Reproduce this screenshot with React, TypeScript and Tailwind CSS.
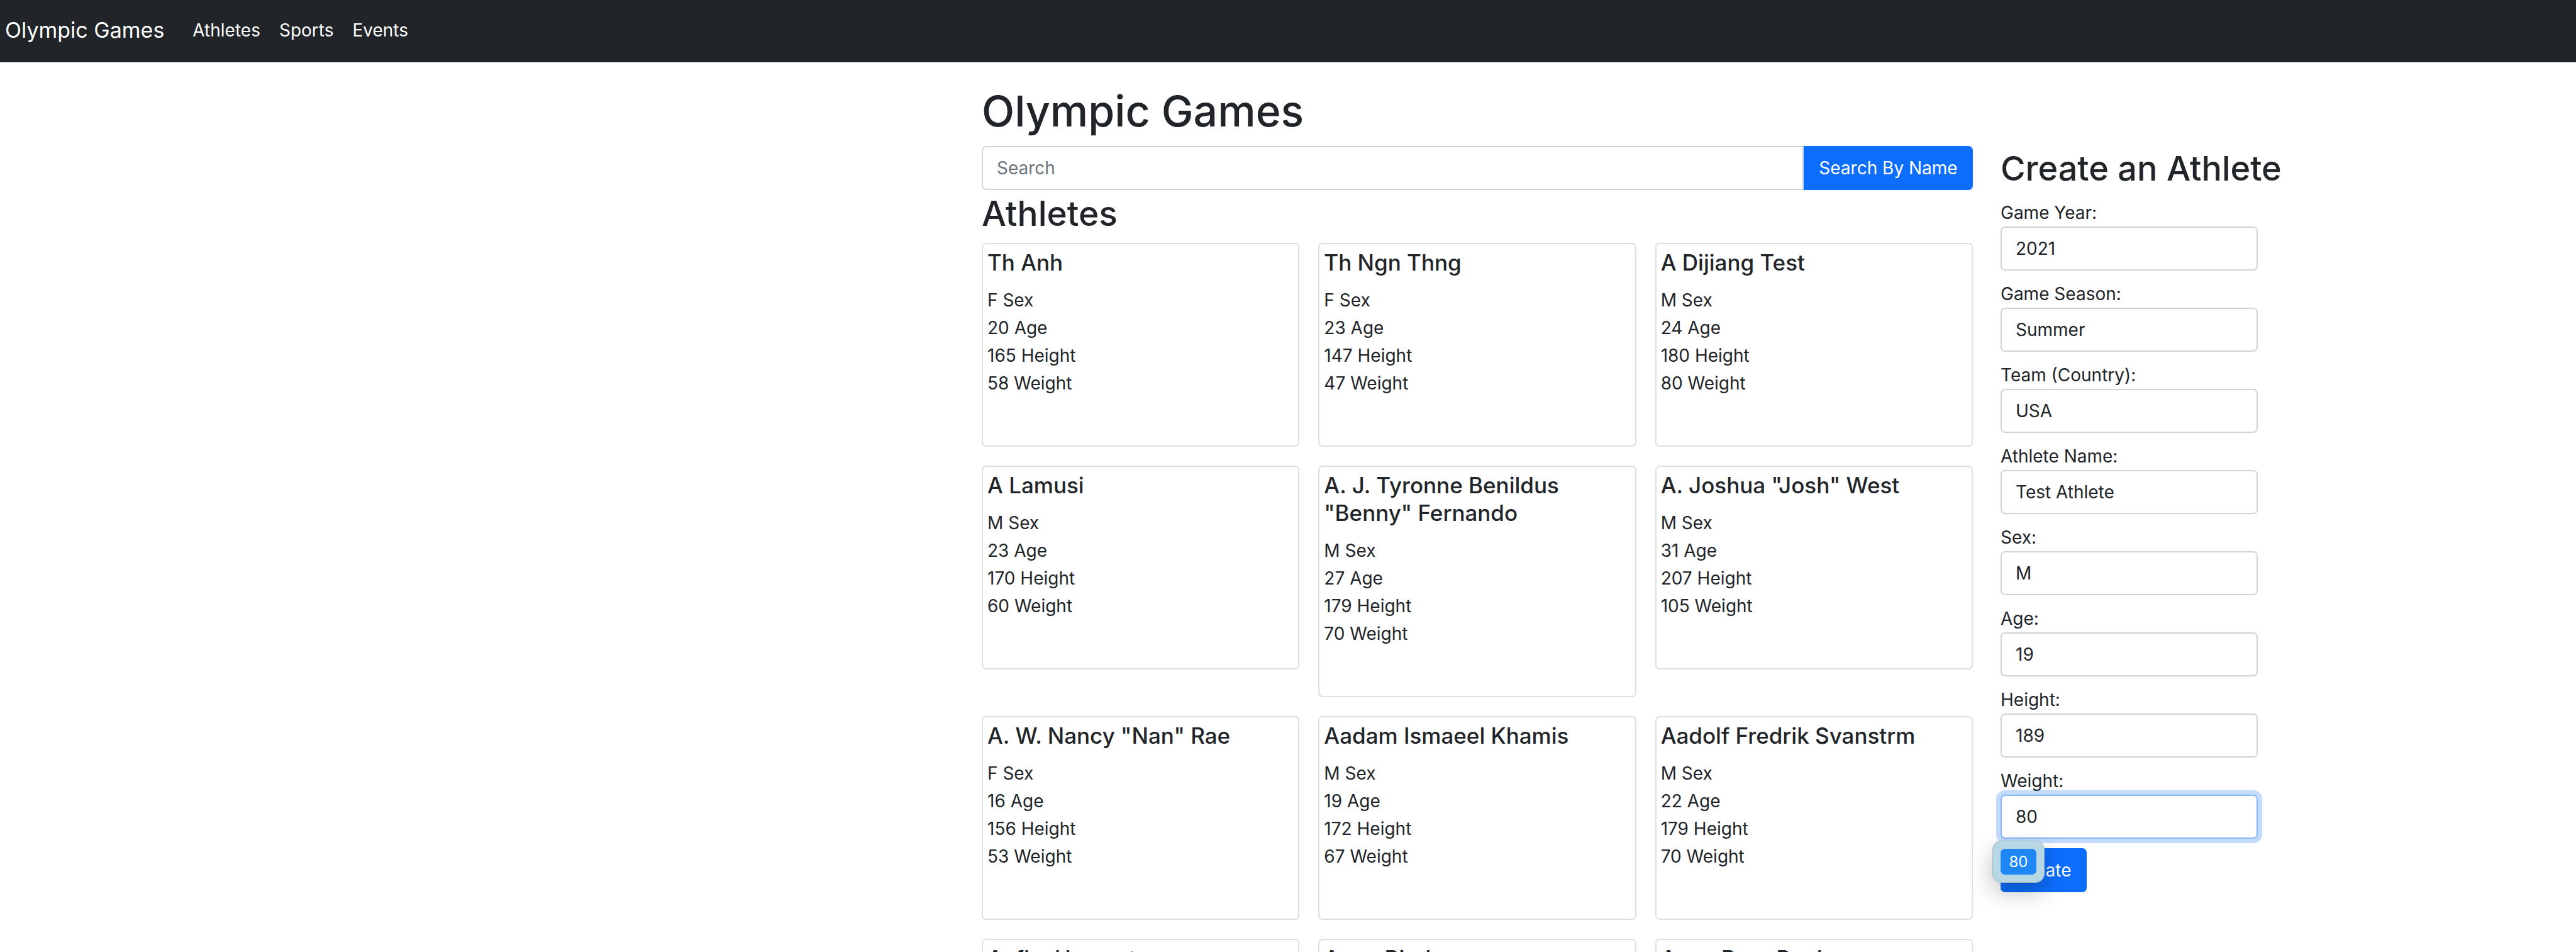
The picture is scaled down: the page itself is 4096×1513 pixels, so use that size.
const ATHLETES = [
  { name: 'Th Anh', sex: 'F', age: 20, height: 165, weight: 58 },
  { name: 'Th Ngn Thng', sex: 'F', age: 23, height: 147, weight: 47 },
  { name: 'A Dijiang Test', sex: 'M', age: 24, height: 180, weight: 80 },
  { name: 'A Lamusi', sex: 'M', age: 23, height: 170, weight: 60 },
  { name: 'A. J. Tyronne Benildus "Benny" Fernando', sex: 'M', age: 27, height: 179, weight: 70 },
  { name: 'A. Joshua "Josh" West', sex: 'M', age: 31, height: 207, weight: 105 },
  { name: 'A. W. Nancy "Nan" Rae', sex: 'F', age: 16, height: 156, weight: 53 },
  { name: 'Aadam Ismaeel Khamis', sex: 'M', age: 19, height: 172, weight: 67 },
  { name: 'Aadolf Fredrik Svanstrm', sex: 'M', age: 22, height: 179, weight: 70 },
  { name: 'Aafke Hament' },
  { name: 'Aage Birch' },
  { name: 'Aage Brge Poulsen' },
];

const FIELDS = [
  { id: 'year', label: 'Game Year:', value: '2021' },
  { id: 'season', label: 'Game Season:', value: 'Summer' },
  { id: 'team', label: 'Team (Country):', value: 'USA' },
  { id: 'name', label: 'Athlete Name:', value: 'Test Athlete' },
  { id: 'sex', label: 'Sex:', value: 'M' },
  { id: 'age', label: 'Age:', value: '19' },
  { id: 'height', label: 'Height:', value: '189' },
  { id: 'weight', label: 'Weight:', value: '80', active: true },
];

type Athlete = { name: string; sex?: string; age?: number; height?: number; weight?: number };

function Navbar() {
  return (
    <nav className="flex h-[99px] items-center bg-[#212529] px-2 pb-[3px] text-white">
      <a href="#" className="mr-[30px] text-[34px] leading-[56px]">Olympic Games</a>
      <div className="flex text-[28px] leading-[44px]">
        <a href="#athletes" className="px-[15px]">Athletes</a>
        <a href="#sports" className="px-[15px]">Sports</a>
        <a href="#events" className="px-[15px]">Events</a>
      </div>
    </nav>
  );
}

function AthleteCard({ athlete }: { athlete: Athlete }) {
  return (
    <article className="min-h-[324px] rounded-[7px] border-2 border-[#dfdfdf] bg-white px-[7px] pt-[7px] pb-[77px]">
      <h3 className="mb-4 text-[35px] leading-[44px] font-medium">{athlete.name}</h3>
      {athlete.sex && (
        <>
          <p>{athlete.sex} Sex</p>
          <p>{athlete.age} Age</p>
          <p>{athlete.height} Height</p>
          <p>{athlete.weight} Weight</p>
        </>
      )}
    </article>
  );
}

function CreateForm() {
  return (
    <form className="pt-[134px] pl-11" onSubmit={(e) => e.preventDefault()}>
      <h2 className="mb-[13px] text-[54px] leading-[70px] font-medium whitespace-nowrap">Create an Athlete</h2>
      {FIELDS.map((f) => (
        <div key={f.id} className="mb-[15px]">
          <label htmlFor={f.id} className="block">{f.label}</label>
          <input
            id={f.id}
            type="text"
            defaultValue={f.value}
            className={
              f.active
                ? 'block h-[70px] w-[409px] rounded-[7px] border-2 border-[#86b7fe] bg-white px-[22px] shadow-[0_0_0_7px_#c2dbfe] outline-none'
                : 'block h-[70px] w-[409px] rounded-[7px] border-2 border-[#ced4da] bg-white px-[22px] outline-none'
            }
          />
        </div>
      ))}
      <div className="relative w-[137px]">
        <button type="submit" className="h-[70px] w-full rounded-[7px] bg-[#0d6efd] text-white">Create</button>
        <div className="absolute -top-3 -left-[13px] flex h-[67px] w-[83px] items-center justify-center rounded-[14px] border border-[#a3b9c2] bg-[#b7d7e5] shadow-[0_14px_36px_rgba(0,0,0,0.25)]">
          <button type="button" className="h-[41px] w-[57px] rounded-[7px] bg-[#2087f6] text-[24px] leading-[41px] text-white">80</button>
        </div>
      </div>
    </form>
  );
}

export default function App() {
  return (
    <div className="h-screen overflow-hidden bg-white font-['Inter',sans-serif] text-[28px] leading-[44px] text-[#212529]">
      <Navbar />
      <div className="grid grid-cols-[1561fr_1576fr_959fr]">
        <main className="col-start-2 pt-8">
          <h1 className="mb-[11px] text-[68px] leading-[90px] font-medium">Olympic Games</h1>
          <form className="flex" onSubmit={(e) => e.preventDefault()}>
            <input
              type="text"
              placeholder="Search"
              aria-label="Search"
              className="h-[70px] min-w-0 flex-1 rounded-l-[7px] border-2 border-[#ced4da] bg-white px-[22px] outline-none placeholder:text-[#6c757d]"
            />
            <button type="submit" className="h-[70px] w-[269px] rounded-r-[7px] bg-[#0d6efd] text-white">Search By Name</button>
          </form>
          <h2 className="mb-[10px] text-[55px] leading-[74px] font-medium">Athletes</h2>
          <section className="grid grid-cols-3 items-start gap-[30px]">
            {ATHLETES.map((a) => (
              <AthleteCard key={a.name} athlete={a} />
            ))}
          </section>
        </main>
        <CreateForm />
      </div>
    </div>
  );
}
